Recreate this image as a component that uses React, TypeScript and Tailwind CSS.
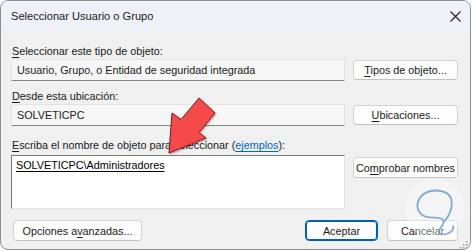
import React from 'react';

function Mn({ children }: { children: React.ReactNode }) {
  return <span className="underline underline-offset-2">{children}</span>;
}

function Btn({ children, primary = false, className = '' }: { children: React.ReactNode; primary?: boolean; className?: string }) {
  return (
    <div
      className={`shrink-0 flex items-center justify-center whitespace-nowrap rounded-[4px] bg-[#fdfdfd] text-[#1a1a1a] border ${
        primary ? 'border-[#005fb8] shadow-[inset_0_0_0_1px_#005fb8]' : 'border-[#d1d1d1] border-b-[#c2c2c2]'
      } ${className}`}
    >
      <span>{children}</span>
    </div>
  );
}

function ReadBox({ children }: { children: React.ReactNode }) {
  return (
    <div className="shrink-0 w-[334px] h-[22px] flex items-center px-[5px] bg-[#f6f6f6] border border-[#e3e3e3] border-b-[#868686] rounded-t-[2px] text-[#1a1a1a]">
      {children}
    </div>
  );
}

export default function App() {
  return (
    <div className="w-[472px] h-[251px] bg-white" style={{ fontFamily: '"Liberation Sans", Arial, sans-serif' }}>
      <div className="relative w-[471px] h-[250px] rounded-[8px] border border-[#8f8f8f] overflow-hidden bg-[#f0f0f0] text-[10.8px] leading-[16px] text-[#1a1a1a]">
        {/* title bar */}
        <div className="h-[30px] bg-[#eef2f8] flex items-center justify-between pl-[10px] pr-[9px]">
          <span className="text-[11.1px]">Seleccionar Usuario o Grupo</span>
          <svg width="11" height="11" viewBox="0 0 11 11">
            <path d="M0.5 0.5 L10.5 10.5 M10.5 0.5 L0.5 10.5" stroke="#1f1f1f" strokeWidth="1.1" />
          </svg>
        </div>

        <div className="w-[469px] pl-[10px] pr-[12px] pt-[12px]">
          <div className="pl-[1px]"><Mn>S</Mn>eleccionar este tipo de objeto:</div>
          <div className="flex items-center gap-[8px]">
            <ReadBox>Usuario, Grupo, o Entidad de seguridad integrada</ReadBox>
            <Btn className="w-[105px] h-[20px]"><Mn>T</Mn>ipos de objeto...</Btn>
          </div>

          <div className="pl-[1px] mt-[7px]"><Mn>D</Mn>esde esta ubicación:</div>
          <div className="flex items-center gap-[8px]">
            <ReadBox>SOLVETICPC</ReadBox>
            <Btn className="w-[105px] h-[20px]"><Mn>U</Mn>bicaciones...</Btn>
          </div>

          <div className="pl-[1px] mt-[11px]">
            <Mn>E</Mn>scriba el nombre de objeto para seleccionar (
            <span className="text-[#0066cc] underline underline-offset-2">ejemplos</span>):
          </div>
          <div className="flex items-start gap-[8px] mt-[2px]">
            <div className="shrink-0 w-[334px] h-[54px] bg-white border border-[#7a7a7a] border-r-[#e3e3e3] border-b-[#e3e3e3] px-[4px] pt-[1px] text-black">
              <span className="underline underline-offset-2">SOLVETICPC\Administradores</span>
            </div>
            <Btn className="w-[105px] h-[21px] mt-[2px]">Co<Mn>m</Mn>probar nombres</Btn>
          </div>

          <div className="flex items-center justify-between mt-[11px]">
            <Btn className="w-[129px] h-[21px] ml-[2px]">Opciones a<Mn>v</Mn>anzadas...</Btn>
            <div className="flex items-center gap-[9px]">
              <Btn primary className="w-[73px] h-[21px]">Aceptar</Btn>
              <Btn className="w-[71px] h-[21px]">Cancelar</Btn>
            </div>
          </div>
        </div>

        {/* red arrow annotation + watermark */}
        <svg className="absolute left-0 top-0 pointer-events-none" width="471" height="250" viewBox="0 0 471 250">
          <defs>
            <filter id="sh" x="-20%" y="-20%" width="140%" height="140%">
              <feDropShadow dx="1" dy="1" stdDeviation="1.2" floodColor="#000" floodOpacity="0.35" />
            </filter>
          </defs>
          <polygon
            points="198,97 214,112 198,131.5 205,137 168,152 171,112 180,118.5"
            fill="#f64a4a"
            stroke="#7a1c1c"
            strokeWidth="1"
            strokeLinejoin="round"
            filter="url(#sh)"
          />
          <circle cx="434" cy="208" r="30" fill="#ffffff" opacity="0.35" />
          <path
            d="M443 221 C452 210 457 191 436 189.5 C418 189 413 204 419 212 C425 220 439 214 442 219 C445 224 436 228 438 232 C441 236 455 231 452 225"
            fill="none"
            stroke="#6f9bd3"
            strokeWidth="1.8"
            strokeLinecap="round"
            opacity="0.85"
          />
          {/* resize grip */}
          <g fill="#9a9a9a">
            <rect x="465" y="240" width="1.5" height="1.5" />
            <rect x="462" y="243" width="1.5" height="1.5" />
            <rect x="465" y="243" width="1.5" height="1.5" />
            <rect x="459" y="246" width="1.5" height="1.5" />
            <rect x="462" y="246" width="1.5" height="1.5" />
            <rect x="465" y="246" width="1.5" height="1.5" />
          </g>
        </svg>
      </div>
    </div>
  );
}
